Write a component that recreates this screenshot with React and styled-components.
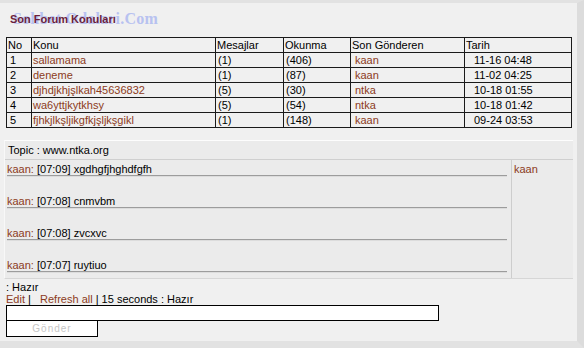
import React from "react";
import styled, { createGlobalStyle } from "styled-components";

const GlobalStyle = createGlobalStyle`
  html, body {
    margin: 0;
    padding: 0;
    background: #f0f0f0;
  }
  body {
    font-family: Tahoma, "Liberation Sans", Arial, sans-serif;
    font-size: 11px;
    color: #000;
  }
`;

const LINK = "#8c3b22";

const Page = styled.div`
  width: 584px;
  height: 348px;
  box-sizing: border-box;
  border-top: 3px solid #e2e2e2;
  border-right: 7px solid #dcdcdc;
  border-bottom: 7px solid #e2e2e2;
  display: flex;
  flex-direction: column;
  overflow: hidden;
`;

const Header = styled.div`
  position: relative;
  height: 34px;
  padding: 0 0 3px 10px;
  display: flex;
  align-items: center;
  box-sizing: border-box;
`;

const Watermark = styled.span`
  position: absolute;
  left: 13px;
  top: 7px;
  font-family: "Liberation Serif", serif;
  font-weight: bold;
  font-size: 16px;
  color: #b8c2f0;
  letter-spacing: 0.2px;
`;

const Title = styled.h1`
  position: relative;
  margin: 0;
  font-size: 11px;
  font-weight: bold;
  color: #6b1f3d;
`;

const Table = styled.table`
  margin-left: 6px;
  width: 566px;
  border-collapse: collapse;
  border: 1px solid #000;
  table-layout: fixed;
`;

const Cell = styled.td`
  border: 1px solid #1a1a1a;
  height: 14px;
  padding: 0 0 0 ${(p) => p.$indent || 1}px;
  line-height: 13px;
  white-space: nowrap;
  overflow: hidden;
  color: ${(p) => (p.$link ? LINK : "#000")};
  font-weight: normal;
  text-align: left;
`;

const Panel = styled.div`
  margin: 12px 0 0 4px;
  width: 568px;
  border-top: 1px solid #fdfdfd;
  border-left: 1px solid #f8f8f8;
  border-bottom: 1px solid #d6d6d6;
  background: #ebebeb;
`;

const TopicBar = styled.div`
  height: 18px;
  line-height: 18px;
  padding-left: 3px;
  border-bottom: 1px solid #cfcfcf;
`;

const ChatArea = styled.div`
  display: flex;
  height: 118px;
`;

const Messages = styled.div`
  width: 504px;
  padding: 3px 0 0 2px;
  border-right: 1px solid #cdcdcd;
`;

const Message = styled.div`
  line-height: 12px;
  height: 12px;
  margin-right: 4px;
  border-bottom: 1px solid #9c9c9c;
  box-shadow: 0 1px 0 #dcdcdc;
  margin-bottom: 19px;
  white-space: nowrap;
`;

const Nick = styled.span`
  color: ${LINK};
`;

const Users = styled.div`
  padding: 3px 0 0 2px;
  line-height: 12px;
  color: ${LINK};
`;

const Footer = styled.div`
  padding: 2px 0 0 6px;
  display: flex;
  flex-direction: column;
`;

const Line = styled.div`
  line-height: 12px;
  height: 12px;
  white-space: pre;
`;

const A = styled.span`
  color: ${LINK};
`;

const Input = styled.div`
  width: 431px;
  height: 14px;
  border: 1px solid #000;
  background: #fff;
`;

const Button = styled.div`
  width: 90px;
  height: 14px;
  border: 1px solid #000;
  border-top: none;
  background: #fff;
  color: #c6c6c6;
  font-size: 10px;
  letter-spacing: 1px;
  line-height: 14px;
  text-align: center;
  padding-top: 1px;
`;

const cols = [
  { label: "No", w: 25 },
  { label: "Konu", w: 184 },
  { label: "Mesajlar", w: 68 },
  { label: "Okunma", w: 67 },
  { label: "Son Gönderen", w: 114 },
  { label: "Tarih", w: 107 },
];

const rows = [
  ["1", "sallamama", "(1)", "(406)", "kaan", "11-16 04:48"],
  ["2", "deneme", "(1)", "(87)", "kaan", "11-02 04:25"],
  ["3", "djhdjkhjşlkah45636832", "(5)", "(30)", "ntka", "10-18 01:55"],
  ["4", "wa6yttjkytkhsy", "(5)", "(54)", "ntka", "10-18 01:42"],
  ["5", "fjhkjlkşljikgfkjşljkşgikl", "(1)", "(148)", "kaan", "09-24 03:53"],
];

const messages = [
  "[07:09] xgdhgfjhghdfgfh",
  "[07:08] cnmvbm",
  "[07:08] zvcxvc",
  "[07:07] ruytiuo",
];

export default function App() {
  return (
    <>
      <GlobalStyle />
      <Page>
        <Header>
          <Watermark>Sohbet Odalari.Com</Watermark>
          <Title>Son Forum Konuları</Title>
        </Header>
        <Table>
          <colgroup>
            {cols.map((c) => (
              <col key={c.label} style={{ width: c.w }} />
            ))}
          </colgroup>
          <thead>
            <tr>
              {cols.map((c) => (
                <Cell as="th" key={c.label}>{c.label}</Cell>
              ))}
            </tr>
          </thead>
          <tbody>
            {rows.map((r) => (
              <tr key={r[0]}>
                <Cell $indent={3}>{r[0]}</Cell>
                <Cell $link>{r[1]}</Cell>
                <Cell $indent={2}>{r[2]}</Cell>
                <Cell $indent={2}>{r[3]}</Cell>
                <Cell $link $indent={4}>{r[4]}</Cell>
                <Cell $indent={9}>{r[5]}</Cell>
              </tr>
            ))}
          </tbody>
        </Table>
        <Panel>
          <TopicBar>Topic : www.ntka.org</TopicBar>
          <ChatArea>
            <Messages>
              {messages.map((m, i) => (
                <Message key={i}>
                  <Nick>kaan:</Nick> {m}
                </Message>
              ))}
            </Messages>
            <Users>kaan</Users>
          </ChatArea>
        </Panel>
        <Footer>
          <Line>: Hazır</Line>
          <Line>
            <A>Edit</A> |   <A>Refresh all</A> | 15 seconds : Hazır
          </Line>
          <Input />
          <Button>Gönder</Button>
        </Footer>
      </Page>
    </>
  );
}
